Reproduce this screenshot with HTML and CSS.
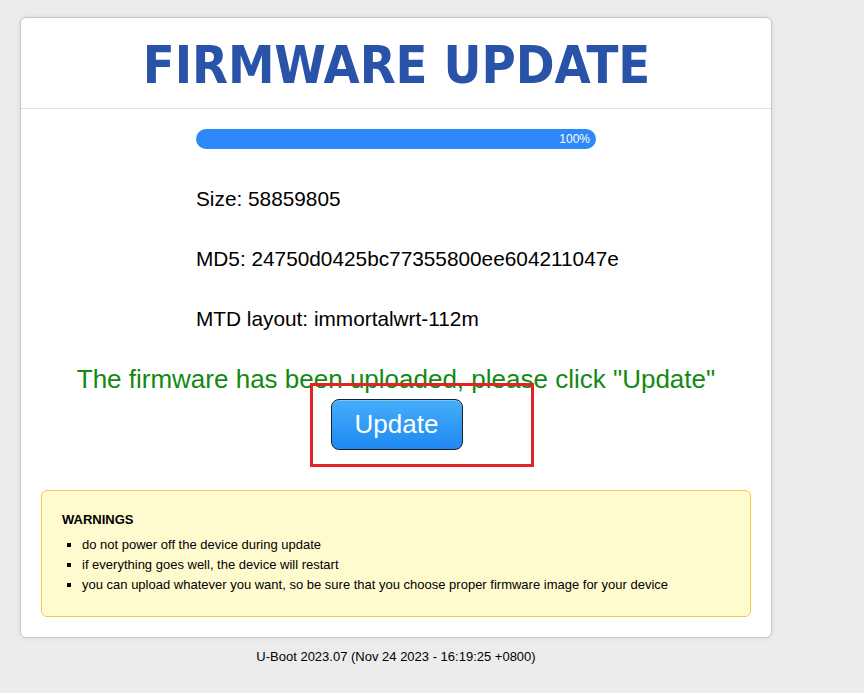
FILE: index.html
```html
<!DOCTYPE html>
<html>
<head>
<meta charset="utf-8">
<title>Firmware update</title>
<link rel="stylesheet" href="styles.css">
</head>
<body>
<div class="page">
  <div class="card">
    <div class="header"><h1 class="title">FIRMWARE UPDATE</h1></div>
    <div class="content">
      <div class="column">
        <div class="progress"><div class="bar"><span class="pct">100%</span></div></div>
        <div class="info info-first">Size: 58859805</div>
        <div class="info">MD5: 24750d0425bc77355800ee604211047e</div>
        <div class="info">MTD layout: immortalwrt-112m</div>
      </div>
      <div class="done">The firmware has been uploaded, please click "Update"</div>
      <div class="btnrow">
        <button class="btn">Update</button>
        <div class="mark"></div>
      </div>
      <div class="warn">
        <div class="warn-title">WARNINGS</div>
        <ul class="warn-list">
          <li>do not power off the device during update</li>
          <li>if everything goes well, the device will restart</li>
          <li>you can upload whatever you want, so be sure that you choose proper firmware image for your device</li>
        </ul>
      </div>
    </div>
  </div>
  <div class="footer">U-Boot 2023.07 (Nov 24 2023 - 16:19:25 +0800)</div>
</div>
</body>
</html>
```
FILE: styles.css
```css
html, body {
  margin: 0;
  padding: 0;
  background: #ececec;
  font-family: "Liberation Sans", Arial, sans-serif;
  color: #000;
}
.page {
  width: 752px;
  margin-left: 20px;
  padding-top: 17px;
}
.card {
  background: #fff;
  border: 1px solid #c6c6c6;
  border-radius: 6px;
  box-shadow: 0 0 6px rgba(0,0,0,0.08);
}
.header {
  height: 90px;
  border-bottom: 1px solid #e2e2e2;
  display: flex;
  align-items: center;
  justify-content: center;
}
.title {
  margin: 0;
  font-family: "DejaVu Sans Condensed", "DejaVu Sans", sans-serif;
  font-weight: bold;
  font-size: 52px;
  line-height: 1;
  color: #2952a9;
  padding-top: 4px;
  padding-left: 1px;
  letter-spacing: -0.1px;
}
.content {
  padding: 20px 20px 20px 20px;
}
.column {
  width: 400px;
  margin: 0 auto;
}
.progress {
  height: 20px;
  border-radius: 10px;
  background: #e6e6e6;
  overflow: hidden;
}
.bar {
  width: 100%;
  height: 100%;
  background: #2d89f9;
  display: flex;
  align-items: center;
  justify-content: flex-end;
}
.pct {
  color: #fff;
  font-size: 12px;
  padding-right: 6px;
}
.info {
  font-size: 20.8px;
  line-height: 60px;
  white-space: nowrap;
}
.info-first {
  margin-top: 20px;
}
.done {
  margin-top: 15px;
  text-align: center;
  color: #128a12;
  font-size: 26px;
  line-height: 30px;
  white-space: nowrap;
}
.btnrow {
  position: relative;
  display: flex;
  justify-content: center;
  margin-top: 5px;
}
.btn {
  width: 132px;
  height: 51px;
  border: 1px solid #1b1f26;
  border-radius: 8px;
  background: linear-gradient(#45aefa, #1f89f2);
  box-shadow: inset 0 1px 0 rgba(255,255,255,0.3);
  color: #fff;
  font-family: "Liberation Sans", Arial, sans-serif;
  font-size: 26px;
  padding: 0;
  margin-left: 1px;
}
.mark {
  position: absolute;
  left: 269px;
  top: -16px;
  width: 218px;
  height: 78px;
  border: 3px solid #e32228;
  pointer-events: none;
}
.warn {
  margin-top: 40px;
  background: #fffbcf;
  border: 1px solid #f7c84a;
  border-radius: 6px;
  padding: 20px 20px 21px 20px;
}
.warn-title {
  font-size: 13px;
  font-weight: bold;
  line-height: 18px;
}
.warn-list {
  margin: 6px 0 0 0;
  padding-left: 20px;
  list-style: square;
}
.warn-list li {
  font-size: 13px;
  line-height: 20px;
}
.footer {
  text-align: center;
  font-size: 13px;
  line-height: 14px;
  margin-top: 12px;
}
```
